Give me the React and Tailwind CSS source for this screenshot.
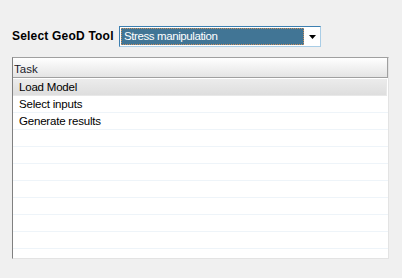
import React from "react";

const rows = ["Select inputs", "Generate results", "", "", "", "", "", "", "", ""];

export default function App() {
  return (
    <div
      className="w-[402px] h-[278px] bg-[#f0f0f0] overflow-hidden"
      style={{ fontFamily: '"Liberation Sans", Arial, sans-serif' }}
    >
      {/* tool picker */}
      <div className="flex items-center pt-[26px] pl-[12px] h-[47px]">
        <span className="w-[107px] text-[12px] font-bold text-black tracking-[0.2px] leading-[21px]">
          Select GeoD Tool
        </span>
        <div className="flex w-[202px] h-[21px] bg-white border border-t-[#3c7fb1] border-l-[#3c7fb1] border-r-[#a9cde6] border-b-[#a9cde6]">
          <div className="ml-[1px] mt-[1px] w-[183px] h-[17px] bg-[#417595] border border-dotted border-[#c89060] flex items-center pl-[2px]">
            <span className="mt-[1px] text-[11.5px] text-white tracking-[-0.4px] leading-none">Stress manipulation</span>
          </div>
          <div className="flex-1 flex items-center justify-center pl-[1px]">
            <svg width="7" height="4" viewBox="0 0 7 4">
              <path d="M0 0h7L3.5 4z" fill="#000" />
            </svg>
          </div>
        </div>
      </div>

      {/* task grid */}
      <div className="ml-[12px] mt-[10px] w-[377px] h-[202px] flex flex-col bg-white border-l border-t border-l-[#808080] border-t-[#a0a0a0] border-r border-b border-r-[#e3e3e3] border-b-[#e3e3e3] overflow-hidden">
        <div className="h-[20px] shrink-0 bg-gradient-to-b from-white to-[#e4e4e4] border-b border-r border-[#a0a0a0] flex items-center pl-[1px]">
          <span className="mt-[4px] text-[11.5px] text-[#1a1a2a] leading-none">Task</span>
        </div>
        <div className="h-[17px] shrink-0 mt-[1px] mr-[1px] bg-gradient-to-b from-[#ececec] to-[#dedede] border-b border-r border-[#e8e8e8] flex items-center pl-[6px]">
          <span className="mt-[2px] text-[11.5px] text-black leading-none tracking-[-0.2px]">Load Model</span>
        </div>
        {rows.map((r, i) => (
          <div key={i} className="h-[17px] shrink-0 border-b border-[#eef4f9] flex items-center pl-[6px]">
            <span className="mt-[2px] text-[11.5px] text-black leading-none tracking-[-0.2px]">{r}</span>
          </div>
        ))}
      </div>
    </div>
  );
}
